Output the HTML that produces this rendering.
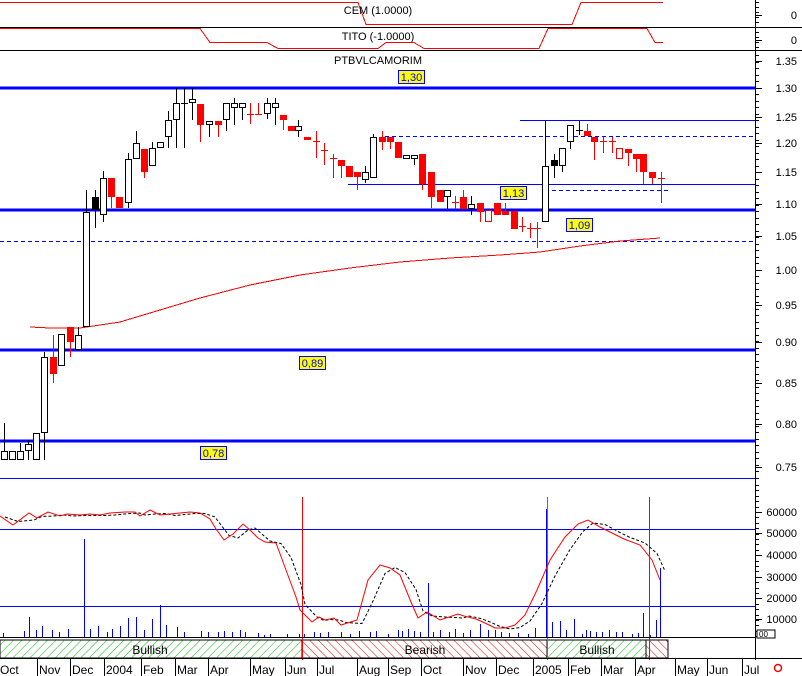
<!DOCTYPE html>
<html><head><meta charset="utf-8">
<style>
html,body{margin:0;padding:0;background:#fff;width:802px;height:676px;overflow:hidden}
svg{display:block;font-family:"Liberation Sans",sans-serif}
</style></head><body>
<svg id="s" width="802" height="676" viewBox="0 0 802 676" xmlns="http://www.w3.org/2000/svg" shape-rendering="crispEdges">
<defs>
<pattern id="hg" width="6" height="6" patternUnits="userSpaceOnUse" patternTransform="rotate(45)"><rect width="6" height="6" fill="#fff"/><line x1="0" y1="0" x2="0" y2="6" stroke="#00c000" stroke-width="1.2"/></pattern>
<pattern id="hr" width="6" height="6" patternUnits="userSpaceOnUse" patternTransform="rotate(-45)"><rect width="6" height="6" fill="#fff"/><line x1="0" y1="0" x2="0" y2="6" stroke="#e00000" stroke-width="1.2"/></pattern>
</defs>
<g id="g"></g>
<line x1="0" y1="27.5" x2="802" y2="27.5" stroke="#000"/>
<line x1="0" y1="50.5" x2="802" y2="50.5" stroke="#000"/>
<polyline fill="none" stroke="#f00" points="0,2.5 358,2.5 366,24.5 572,24.5 581,2.5 663,2.5"/>
<text x="378" y="14" font-size="11" text-anchor="middle">CEM (1.0000)</text>
<polyline fill="none" stroke="#f00" points="0,28.5 200,28.5 210,42.5 267,42.5 278,48.5 378,48.5 386,42.5 414,42.5 424,48.5 539,48.5 548,28.5 647,28.5 655,42.5 663,42.5"/>
<text x="378" y="40" font-size="11" text-anchor="middle">TITO (-1.0000)</text>
<text x="378" y="64" font-size="11" text-anchor="middle">PTBVLCAMORIM</text>
<line x1="755.5" y1="0" x2="755.5" y2="660" stroke="#000"/>
<line x1="0" y1="637.5" x2="755" y2="637.5" stroke="#000"/>
<line x1="0" y1="658.5" x2="802" y2="658.5" stroke="#000"/>
<rect x="757" y="630" width="18" height="8" fill="#fff" stroke="#000"/>
<text x="759" y="637" font-size="8">00</text>
<circle cx="778" cy="668" r="3.5" fill="none" stroke="#f00" stroke-width="1.5" shape-rendering="auto"/>
</svg>
<script>
var g=document.getElementById('g'),NS='http://www.w3.org/2000/svg';
function el(t,a,txt){var e=document.createElementNS(NS,t);for(var k in a)e.setAttribute(k,a[k]);if(txt!=null)e.textContent=txt;g.appendChild(e);return e;}
function L(x1,y1,x2,y2,c,w,d){var a={x1:x1,y1:y1,x2:x2,y2:y2,stroke:c,'stroke-width':w||1};if(d)a['stroke-dasharray']=d;el('line',a);}
el('rect',{x:0,y:640,width:302,height:18,fill:'url(#hg)',stroke:'#000'});
el('rect',{x:302,y:640,width:245,height:18,fill:'url(#hr)',stroke:'#000'});
el('rect',{x:547,y:640,width:99,height:18,fill:'url(#hg)',stroke:'#000'});
el('rect',{x:646,y:640,width:22,height:18,fill:'url(#hr)',stroke:'#000'});
[['Bullish',150],['Bearish',425],['Bullish',597]].forEach(function(b){el('text',{x:b[1],y:654,'font-size':12,'text-anchor':'middle'},b[0]);});
var ms=[['Oct',-2],['Nov',37],['Dec',70],['2004',104],['Feb',141],['Mar',175],['Apr',208],['May',250],['Jun',285],['Jul',317],['Aug',357],['Sep',388],['Oct',421],['Nov',463],['Dec',496],['2005',533],['Feb',568],['Mar',601],['Apr',635],['May',675],['Jun',707],['Jul',742]];
ms.forEach(function(m){L(m[1]+0.5,658,m[1]+0.5,676,'#000');el('text',{x:m[1]+2,y:674,'font-size':12},m[0]);});
var yl=[['0',15],['0',40],['1.35',61],['1.30',88],['1.25',117],['1.20',143],['1.15',172],['1.10',204],['1.05',236],['1.00',270],['0.95',305],['0.90',342],['0.85',383],['0.80',424],['0.75',467],['60000',512],['50000',533],['40000',555],['30000',577],['20000',598],['10000',619]];
yl.forEach(function(l){L(755,l[1]+0.5,762,l[1]+0.5,'#000');el('text',{x:797,y:l[1]+4,'font-size':11,'text-anchor':'end'},l[0]);});
for(var y=55;y<478;y+=6.5)L(755,Math.round(y)+0.5,759,Math.round(y)+0.5,'#000');
for(var y=2;y<50;y+=5)L(755,y+0.5,759,y+0.5,'#000');
for(var y=485;y<637;y+=5.4)L(755,Math.round(y)+0.5,759,Math.round(y)+0.5,'#000');
[88,210,350,441].forEach(function(y){L(0,y,755,y,'#0000ff',3);});
L(520,120.5,755,120.5,'#0000ff');L(385,136.5,755,136.5,'#0000ff',1,'4,3');
L(348,184.5,755,184.5,'#0000ff');L(545,190.5,668,190.5,'#0000ff',1,'4,3');
L(0,241.5,755,241.5,'#0000ff',1,'4,3');L(0,478.5,755,478.5,'#0000ff');
L(0,529.5,755,529.5,'#0000ff');L(0,606.5,755,606.5,'#0000ff');
el('polyline',{fill:'none',stroke:'#f00','stroke-width':1,points:'30,327 50,328 80,328 120,322 160,310 200,298 250,285 300,275 350,268 400,262 450,258 500,255 540,252 580,246 620,241 660,238'});
var c=[[4,451,460,423,460,'W'],[12,451,460,451,460,'W'],[20,451,460,443,460,'W'],[28,444,451,440,460,'W'],[36,433,460,433,460,'W'],[44,357,433,352,460,'W'],[53,357,374,335,383,'R'],[61,334,366,334,366,'W'],[70,327,342,327,357,'R'],[78,335,350,327,350,'W'],[86,212,327,190,327,'W'],[95,197,210,190,228,'B'],[103,178,215,171,222,'W'],[111,178,197,178,208,'R'],[119,197,208,197,208,'R'],[128,159,203,153,208,'W'],[136,143,159,131,159,'W'],[144,149,172,149,178,'R'],[152,148,166,142,166,'W'],[160,142,148,142,148,'W'],[168,120,137,111,148,'W'],[176,103,120,88,148,'W'],[184,103,103,88,148,'K'],[192,99,103,88,120,'W'],[200,104,125,104,142,'R'],[209,121,125,121,137,'W'],[218,121,125,121,137,'R'],[226,103,120,103,131,'W'],[234,103,108,98,125,'W'],[242,103,108,103,120,'W'],[250,114,114,103,124,'C'],[258,114,114,103,114,'C'],[267,103,114,98,119,'W'],[275,103,108,98,125,'W'],[283,115,120,115,130,'R'],[291,126,131,126,131,'R'],[298,126,131,120,137,'W'],[307,137,140,137,140,'R'],[316,141,141,131,158,'C'],[324,150,150,143,165,'C'],[333,158,158,154,178,'C'],[341,160,166,160,178,'R'],[349,166,177,166,177,'R'],[357,172,177,172,190,'R'],[365,172,180,166,183,'W'],[373,137,178,134,178,'W'],[382,137,142,131,150,'R'],[390,137,142,137,149,'R'],[398,142,158,142,158,'R'],[406,155,159,155,159,'W'],[414,155,159,155,165,'W'],[422,154,184,154,190,'R'],[431,172,197,172,208,'R'],[440,190,202,190,202,'R'],[447,190,197,190,209,'W'],[455,202,202,196,209,'C'],[463,197,209,190,209,'R'],[471,204,209,196,215,'W'],[480,203,212,203,222,'R'],[488,210,222,210,222,'O'],[497,203,215,203,215,'R'],[505,211,215,203,215,'R'],[514,211,229,211,229,'R'],[522,226,226,217,232,'C'],[530,228,228,223,238,'C'],[537,228,228,222,248,'C'],[545,166,222,120,222,'W'],[554,160,166,154,178,'B'],[562,148,166,148,172,'W'],[570,125,142,125,149,'W'],[579,130,130,121,135,'K'],[587,131,136,124,136,'R'],[594,137,142,137,160,'R'],[603,141,141,137,153,'C'],[612,141,141,137,153,'C'],[619,148,159,148,159,'O'],[628,149,153,149,166,'R'],[636,154,159,154,172,'R'],[643,154,172,154,184,'R'],[652,172,178,172,184,'R'],[661,178,178,172,203,'C']];
c.forEach(function(k){var x=k[0],t=k[5],col=(t=='R'||t=='C'||t=='O')?'#f00':'#000';
 L(x+0.5,k[3],x+0.5,k[4],col);
 if(t=='C'||t=='K'){L(x-3,k[1]+0.5,x+4,k[1]+0.5,col);return;}
 var h=Math.max(k[2]-k[1],3);
 if(t=='R')el('rect',{x:x-3,y:k[1],width:7,height:h,fill:'#f00'});
 else if(t=='B')el('rect',{x:x-3,y:k[1],width:7,height:h,fill:'#000'});
 else el('rect',{x:x-2.5,y:k[1]+0.5,width:6,height:h-1,fill:'#fff',stroke:t=='O'?'#f00':'#000'});
});
[['1,30',398,70],['1,13',500,186],['1,09',566,218],['0,89',299,356],['0,78',200,446]].forEach(function(b){
 el('rect',{x:b[1]+0.5,y:b[2]+0.5,width:26,height:13,fill:'#ffff00',stroke:'#0000ff'});
 el('text',{x:b[1]+13.5,y:b[2]+11,'font-size':11,'text-anchor':'middle',fill:'#0000ff'},b[0]);});
var v=[[3,633],[24,631],[29,617],[36,630],[42,626],[52,630],[59,632],[68,629],[84,539],[90,629],[98,626],[107,632],[112,629],[120,626],[128,618],[136,617],[144,630],[152,619],[160,605],[166,625],[177,627],[184,632],[201,631],[208,632],[218,632],[224,631],[232,632],[240,630],[245,632],[258,633],[264,635],[270,634],[287,634],[299,634],[304,634],[314,632],[320,633],[328,632],[341,632],[350,634],[359,631],[370,632],[376,631],[388,634],[398,630],[402,631],[408,629],[414,631],[420,632],[428,583],[433,632],[440,630],[449,632],[455,629],[463,633],[470,630],[480,624],[488,630],[495,630],[501,632],[509,633],[518,633],[528,634],[535,628],[546,509],[552,622],[560,621],[566,630],[574,619],[582,634],[586,630],[590,631],[596,632],[602,632],[609,630],[616,632],[622,632],[632,634],[638,633],[643,613],[650,635],[656,620],[660,568]];
v.forEach(function(b){L(b[0]+0.5,b[1],b[0]+0.5,637,'#0000ff');});
L(302.5,497,302.5,660,'#f00');L(649.5,497,649.5,660,'#f00');L(547.5,497,547.5,660,'#00c000');
var r='0,516 13,525 29,513 37,518 48,512 60,516 67,514 80,515 90,514 100,515 110,513 125,512 135,512 140,516 150,510 160,515 170,514 180,513 190,512 200,513 210,519 216,529 224,540 233,534 243,524 250,530 258,538 265,542 276,543 286,570 296,597 300,610 312,622 319,617 325,620 334,618 341,625 357,620 368,580 380,565 390,568 400,575 411,602 418,618 427,612 440,620 458,614 464,616 476,619 485,623 495,628 505,628 515,625 525,615 537,590 550,560 565,537 578,524 588,520 600,527 612,533 624,539 640,545 652,560 660,580';
var pts=r.split(' ').map(function(p){return p.split(',').map(Number);});
var d=pts.map(function(p,i){var q=pts[Math.max(0,i-1)];return (p[0]+5)+','+((p[1]+q[1])/2+1);}).join(' ');
el('polyline',{fill:'none',stroke:'#000','stroke-dasharray':'3,2',points:d,'shape-rendering':'auto'});
el('polyline',{fill:'none',stroke:'#f00',points:r,'shape-rendering':'auto'});
</script>
</body></html>
